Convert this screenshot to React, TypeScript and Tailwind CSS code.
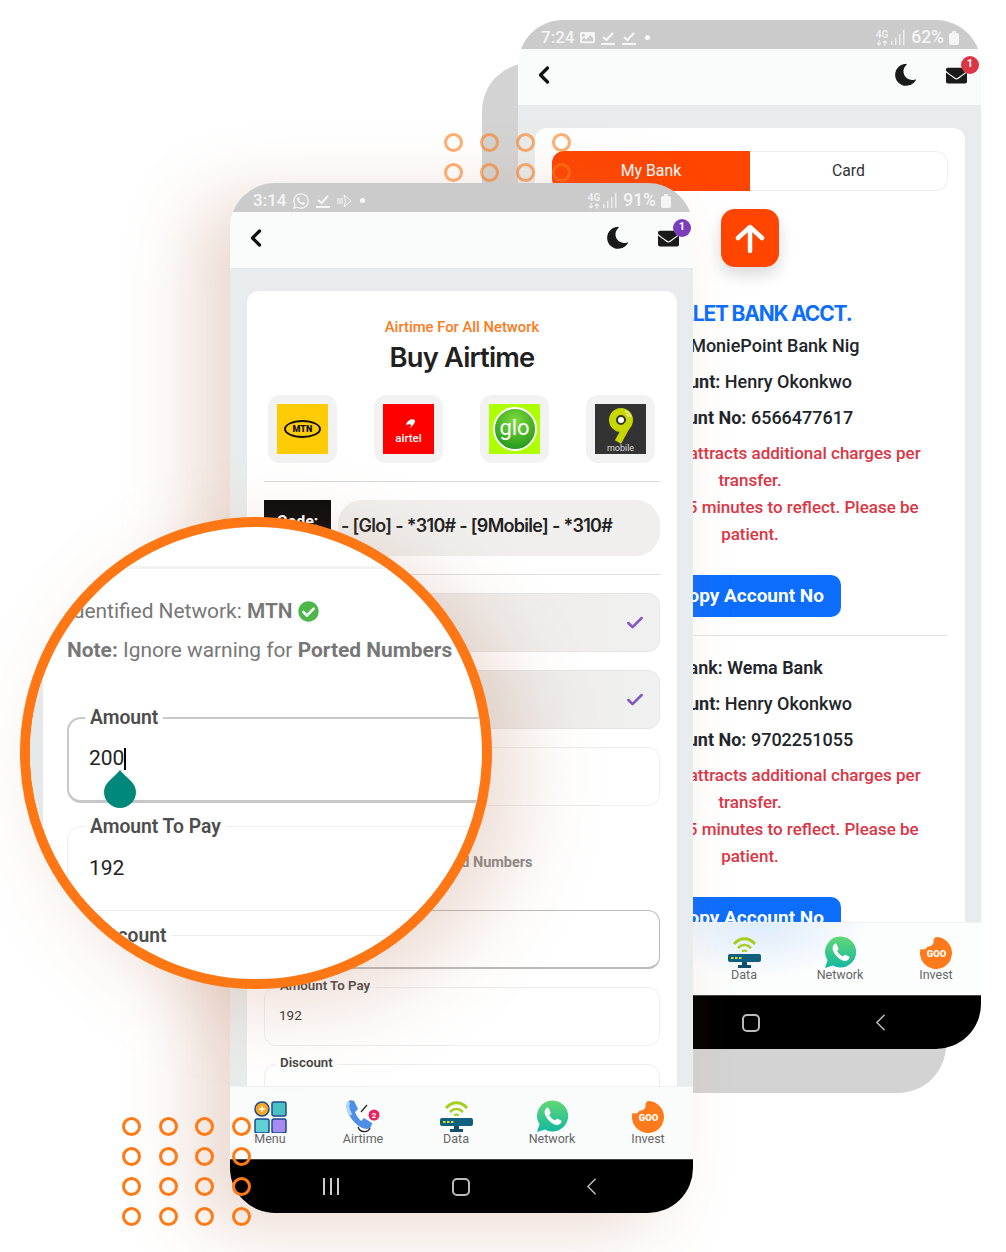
import React from 'react';
import { ChevronLeft, Check } from 'lucide-react';
import { FaMoon, FaEnvelope, FaCheckCircle, FaWhatsapp, FaImage } from 'react-icons/fa';

const CheckLine = () => (
  <svg width="15" height="15" viewBox="0 0 15 15" fill="none" stroke="currentColor" strokeWidth="2.2">
    <path d="M2 7l3.500 3L12 3" />
    <path d="M0 14h14" />
  </svg>
);

const ArrowOutline = () => (
  <svg width="15" height="16" viewBox="0 0 15 16" fill="none" stroke="currentColor" strokeWidth="1">
    <path d="M0 6h6M0 8h6M0 10h6M7 2l7 6-7 6 1.500-6z" />
  </svg>
);

const FourG = () => (
  <div className="flex flex-col items-center text-white/70">
    <span className="text-[10px] leading-[10px] font-bold">4G</span>
    <svg width="12" height="6" viewBox="0 0 12 6" fill="none" stroke="currentColor" strokeWidth="1.200">
      <path d="M3 0v5M1 3l2 2 2-2M9 6V1M7 3l2-2 2 2" />
    </svg>
  </div>
);

const Bars = () => (
  <svg width="14" height="15" viewBox="0 0 14 15" fill="currentColor" className="opacity-80">
    <rect x="0" y="11" width="1.500" height="4" />
    <rect x="4" y="8" width="1.500" height="7" />
    <rect x="8" y="4" width="1.500" height="11" />
    <rect x="12" y="0" width="1.500" height="15" />
  </svg>
);

const Battery = () => (
  <div className="flex flex-col items-center">
    <div className="w-1 h-[2px] bg-white/70" />
    <div className="w-[10px] h-[12px] rounded-[2px] bg-white/80" />
  </div>
);

const StatusBar = ({ time, battery, icons }: { time: string; battery: string; icons: React.ReactNode }) => (
  <div className="h-[29px] shrink-0 bg-[#cbcbcb] text-white/80 flex items-center justify-between pt-[6px] pl-[23px] pr-[22px]">
    <div className="flex items-center gap-[6px]">
      <span className="text-[17px] font-medium">{time}</span>
      {icons}
      <span className="w-[5px] h-[5px] rounded-full bg-white/90 ml-[2px]" />
    </div>
    <div className="flex items-center gap-[5px]">
      <div className="flex items-center gap-[3px]">
        <FourG />
        <Bars />
      </div>
      <span className="text-[17.5px] font-medium ml-[1px]">{battery}</span>
      <Battery />
    </div>
  </div>
);

const TopBar = ({ badge }: { badge: string }) => (
  <div className="h-[57px] shrink-0 bg-[#fafbfb] border-b border-[#e6e9e9] flex items-center justify-between pb-[4px] pl-[12px] pr-[14px]">
    <ChevronLeft size={28} strokeWidth={2.8} className="text-[#111]" />
    <div className="flex items-center gap-[30px]">
      <FaMoon size={22} className="text-[#1a1a1a] -rotate-[10deg]" />
      <div className="relative">
        <FaEnvelope size={21} className="text-[#1a1a1a]" />
        <span className={`absolute -top-[9px] -right-[12px] w-[18px] h-[18px] rounded-full text-white text-[11px] font-bold flex items-center justify-center ${badge}`}>1</span>
      </div>
    </div>
  </div>
);

const MenuIcon = () => (
  <svg width="33" height="32" viewBox="0 0 33 32">
    <circle cx="8" cy="8" r="7" fill="#f7a823" stroke="#1c4a8e" strokeWidth="1.500" />
    <path d="M8 5v6M5 8h6" stroke="#fff" strokeWidth="1.500" />
    <rect x="18" y="1" width="14" height="14" rx="2" fill="#49c0c4" stroke="#1c4a8e" strokeWidth="1.500" />
    <rect x="1" y="18" width="14" height="14" rx="2" fill="#5fd0d6" stroke="#1c4a8e" strokeWidth="1.500" />
    <rect x="18" y="18" width="14" height="14" rx="2" fill="#a78bf0" stroke="#1c4a8e" strokeWidth="1.500" />
  </svg>
);

const AirtimeIcon = () => (
  <svg width="34" height="34" viewBox="0 0 34 34">
    <path d="M12 27c2 6 10 6 12 1" stroke="#222" strokeWidth="1.300" fill="none" />
    <path d="M3 1C-1 4 0 11 5 18s11 11 16 11c3 0 5-3 5-6l-8-5-3 3c-2-2-5-6-6-9l3-3L8 1C6 0 4 0 3 1z" fill="#4d8fe6" />
    <path d="M3 2c-2 3-1 8 2 13" stroke="#b5d8f9" strokeWidth="3" fill="none" />
    <path d="M15 12l6-7" stroke="#222" strokeWidth="1.200" />
    <circle cx="28" cy="15" r="5.500" fill="#e8245c" />
    <text x="28" y="18" textAnchor="middle" fontSize="8" fontWeight="700" fill="#fff">2</text>
  </svg>
);

const DataIcon = () => (
  <svg width="33" height="33" viewBox="0 0 33 33">
    <path d="M6 8c6-7 15-7 21 0" stroke="#a4cf1e" strokeWidth="3" fill="none" />
    <path d="M10 12c4-4 9-4 13 0" stroke="#a4cf1e" strokeWidth="2.500" fill="none" />
    <path d="M14 15.500c2-1.500 3-1.500 5 0" stroke="#a4cf1e" strokeWidth="2" fill="none" />
    <rect x="0" y="18" width="33" height="8" rx="2" fill="#0f5f7e" />
    <rect x="3" y="21" width="2.500" height="2" fill="#d7dc3a" />
    <rect x="7" y="21" width="2.500" height="2" fill="#d7dc3a" />
    <rect x="11" y="21" width="2.500" height="2" fill="#d7dc3a" />
    <path d="M14 26h5v3h4v3H10v-3h4z" fill="#14506c" />
  </svg>
);

const NetworkIcon = () => (
  <svg width="33" height="33" viewBox="0 0 33 33">
    <defs>
      <linearGradient id="wa" x1="0" y1="0" x2="0" y2="1">
        <stop offset="0" stopColor="#63d874" />
        <stop offset="1" stopColor="#12b8a0" />
      </linearGradient>
    </defs>
    <path d="M16.500 0.500a15.500 15.500 0 1 1-7.500 29L1 32l2.500-7.700A15.500 15.500 0 0 1 16.500 0.500z" fill="url(#wa)" />
    <path d="M11 7.500c-1.500 1-2.800 3-2.300 6 .7 4 6.500 10.500 11.300 11.400 2.700.5 4.700-1 5.300-2.600.3-.8.200-1.400-.2-1.700l-3.500-1.800c-.5-.2-1-.1-1.300.3l-1.200 1.500c-2.500-1-4.700-3-6-5.500l1.200-1.300c.3-.4.400-.9.200-1.300l-1.600-3.900c-.3-.8-1.200-1.100-1.900-1.100z" fill="#fff" />
  </svg>
);

const InvestIcon = () => (
  <svg width="32" height="32" viewBox="0 0 32 32">
    <path d="M16 0a16 16 0 1 1-15.500 12c3 1 6 .500 7-2.500 3 .5 6.500-2 6-5.500 0-1.500.800-3.500 2.500-4z" fill="#ff7a1a" />
    <text x="16.500" y="20" textAnchor="middle" fontSize="9.500" fontWeight="900" fill="#fff">GOO</text>
  </svg>
);

const BottomNav = ({ glow }: { glow?: string }) => {
  const items = [
    { label: 'Menu', icon: <MenuIcon /> },
    { label: 'Airtime', icon: <AirtimeIcon /> },
    { label: 'Data', icon: <DataIcon /> },
    { label: 'Network', icon: <NetworkIcon /> },
    { label: 'Invest', icon: <InvestIcon /> },
  ];
  return (
    <div className={`h-[73px] shrink-0 border-t border-[#f0f2f2] grid grid-cols-[80px_106px_80px_112px_80px] pt-[13px] ${glow ?? 'bg-[#fafbfb]'}`}>
      {items.map((it) => (
        <div key={it.label} className="flex flex-col items-center">
          <div className="h-[33px] flex items-center justify-center">{it.icon}</div>
          <span className="text-[12.5px] leading-[14px] text-[#666] -mt-[1px]">{it.label}</span>
        </div>
      ))}
    </div>
  );
};

const SoftKeys = ({ shift }: { shift: string }) => (
  <div className={`h-[54px] shrink-0 bg-black border-t border-[#444] flex items-center justify-center text-[#bbb] ${shift}`}>
    <div className="w-[130px] flex justify-center gap-[5px]">
      <span className="w-[2px] h-[17px] bg-[#ccc]" />
      <span className="w-[2px] h-[17px] bg-[#ccc]" />
      <span className="w-[2px] h-[17px] bg-[#ccc]" />
    </div>
    <div className="w-[130px] flex justify-center">
      <span className="w-[18px] h-[18px] rounded-[5px] border-2 border-[#bbb]" />
    </div>
    <div className="w-[130px] flex justify-center">
      <ChevronLeft size={29} strokeWidth={1.300} />
    </div>
  </div>
);

const Tile = ({ children, bg }: { children: React.ReactNode; bg: string }) => (
  <div className="w-[69px] h-[68px] rounded-xl bg-[#f2f2f2] flex items-center justify-center">
    <div className={`w-[51px] h-[50px] flex flex-col items-center justify-center overflow-hidden ${bg}`}>{children}</div>
  </div>
);

const Field = ({ label, value, box, extra }: { label: string; value?: string; box: string; extra?: React.ReactNode }) => (
  <div className={`relative h-[59px] rounded-xl flex items-center justify-between pl-[14px] pr-[14px] ${box}`}>
    <span className="absolute -top-[10px] left-[11px] bg-white px-1 text-[13.3px] leading-[16px] font-semibold text-[#444]">{label}</span>
    <span className="text-[13.5px] text-[#333] -mt-[2px]">{value}</span>
    {extra}
  </div>
);

const BankBlock = ({ bank, no, strong }: { bank: string; no: string; strong?: boolean }) => (
  <div className="text-center text-[#212529]">
    <p className={`text-[18px] leading-[28px] mb-2 ${strong ? 'font-semibold' : 'font-medium'}`}>{bank}</p>
    <p className="text-[18px] leading-[28px] mb-2 font-medium"><b className="font-bold">Account:</b> Henry Okonkwo</p>
    <p className="text-[18px] leading-[28px] font-medium"><b className="font-bold">Account No:</b> {no}</p>
    <p className="mt-2 text-[17px] leading-[27px] font-medium text-[#dc3545]">
      Every transfer attracts additional charges per<br />transfer.<br />Wait for up to 5 minutes to reflect. Please be<br />patient.
    </p>
    <div className="mt-[27px] mx-auto w-[182px] h-[42px] rounded-[10px] bg-[#0d6efd] text-white text-[19px] font-bold flex items-center justify-center">Copy Account No</div>
  </div>
);

export default function App() {
  return (
    <div className="relative w-[1006px] h-[1252px] bg-white overflow-hidden font-['Roboto',sans-serif]">
      {/* grey shape behind the back phone */}
      <div className="absolute left-[482px] top-[63px] w-[464px] h-[1030px] rounded-[48px] bg-[#d3d3d3]" />

      {/* back phone: bank transfer */}
      <div className="absolute left-[518px] top-[20px] w-[463px] h-[1029px] rounded-[45px] overflow-hidden flex flex-col">
        <StatusBar
          time="7:24"
          battery="62%"
          icons={<><FaImage size={15} /><CheckLine /><CheckLine /></>}
        />
        <TopBar badge="bg-[#dc3545]" />
        <div className="flex-1 min-h-0 overflow-hidden bg-[#e9ecec] pl-[17px] pr-[16px] pt-[22px]">
          <div className="bg-white rounded-t-xl h-[900px] px-[17px] pt-[23px]">
            <div className="flex h-[40px] text-[15.8px]">
              <div className="w-1/2 rounded-l-xl bg-[#ff4500] text-white flex items-center justify-center">My Bank</div>
              <div className="w-1/2 rounded-r-xl border border-l-0 border-[#eeeeee] text-[#333] flex items-center justify-center">Card</div>
            </div>
            <div className="mt-[18px] mx-auto w-[58px] h-[58px] rounded-[14px] bg-[#ff4500] shadow-[0_8px_16px_rgba(0,0,0,0.15)] flex items-center justify-center">
              <svg width="30" height="29" viewBox="0 0 30 29" fill="none" stroke="#fff" strokeWidth="4.500" strokeLinecap="round" strokeLinejoin="round">
                <path d="M15 27V3M3 14L15 3l12 11" />
              </svg>
            </div>
            <h3 className="mt-[32px] text-center text-[21px] leading-[30px] font-['Inter',sans-serif] font-bold tracking-[-1.2px] text-[#0d6efd]">WALLET BANK ACCT.</h3>
            <div className="mt-[3px]">
              <BankBlock bank="Bank: MoniePoint Bank Nig" no="6566477617" />
            </div>
            <hr className="mt-[18px] border-[#e2e2e2]" />
            <div className="mt-[18px]">
              <BankBlock bank="Bank: Wema Bank" no="9702251055" strong />
            </div>
          </div>
        </div>
        <BottomNav glow="bg-[radial-gradient(ellipse_110px_55px_at_240px_0,#dcebfb,#fcfdfd)]" />
        <SoftKeys shift="pl-[2px]" />
      </div>

      {/* faded rings over the back phone */}
      <div className="absolute left-[444px] top-[133px] grid grid-cols-4 gap-x-[17px] gap-y-[11px] opacity-60">
        {Array.from({ length: 8 }).map((_, i) => (
          <span key={i} className="w-[19px] h-[19px] rounded-full border-[3px] border-[#ff7a14]" />
        ))}
      </div>

      {/* front phone: buy airtime */}
      <div className="absolute left-[230px] top-[183px] w-[463px] h-[1030px] rounded-[45px] shadow-[-35px_15px_70px_rgba(190,130,100,0.3)]">
        <div className="w-full h-full rounded-[45px] overflow-hidden flex flex-col">
          <StatusBar
            time="3:14"
            battery="91%"
            icons={<><FaWhatsapp size={18} /><CheckLine /><ArrowOutline /></>}
          />
          <TopBar badge="bg-[#7b3db8]" />
          <div className="flex-1 min-h-0 overflow-hidden bg-[#e9ecec] pl-[17px] pr-[16px] pt-[22px]">
            <div className="bg-white rounded-t-xl h-[900px] px-[17px] pt-[26px]">
              <p className="text-center text-[14.8px] leading-[20px] font-medium text-[#ff7a1a]">Airtime For All Network</p>
              <h2 className="mt-[4px] text-center text-[27.3px] leading-[34px] font-['Inter',sans-serif] font-semibold tracking-[-0.8px] text-[#212121]">Buy Airtime</h2>
              <div className="mt-[20px] pl-[4px] pr-[5px] flex justify-between">
                <Tile bg="bg-[#ffcb05]">
                  <span className="w-[37px] h-[18px] rounded-[50%] border-2 border-[#111] text-[9px] leading-[14px] font-black text-center text-[#111]">MTN</span>
                </Tile>
                <Tile bg="bg-[#ff0000]">
                  <svg width="14" height="14" viewBox="0 0 14 14" className="mt-[4px]">
                    <path d="M2 13c3-1 6-3 7-5 1-2-3-2-5-1C5 1 13 0 13 3c0 3-5 8-11 10z" fill="#fff" />
                  </svg>
                  <span className="text-[11.5px] leading-[13px] font-medium text-white">airtel</span>
                </Tile>
                <Tile bg="bg-[#aeff00]">
                  <div className="w-[44px] h-[44px] rounded-full border-2 border-white bg-[radial-gradient(circle_at_50%_30%,#7fdc3a,#118a16)] flex items-center justify-center text-white text-[22px] leading-[24px] pb-[3px]">glo</div>
                </Tile>
                <Tile bg="bg-[#333333]">
                  <svg width="28" height="36" viewBox="0 0 28 36" fill="none" className="mt-[2px]">
                    <circle cx="14" cy="12" r="8.500" stroke="#c6d800" strokeWidth="7" />
                    <path d="M21 16L11 34" stroke="#c6d800" strokeWidth="7" />
                    <circle cx="14" cy="12" r="3" fill="#fff" />
                    <path d="M18 3a8 8 0 0 1 6 6M19 6a5 5 0 0 1 3 3" stroke="#fff" strokeWidth="1" />
                  </svg>
                  <span className="text-[9px] leading-[9px] text-[#ddd]">mobile</span>
                </Tile>
              </div>
              <hr className="mt-[18px] border-[#d8d8d8]" />
              <div className="mt-[18px] flex gap-[7px] h-[56px]">
                <div className="w-[67px] h-full bg-[#0a0a0a] text-white text-[16px] font-bold flex justify-center pt-[10px]">Code:</div>
                <div className="flex-1 rounded-[24px] bg-[#f0efed] flex items-center pl-[3px] pb-[6px] text-[18px] font-['Inter',sans-serif] font-semibold tracking-[-0.7px] text-[#222]">
                  - [Glo] - *310# - [9Mobile] - *310#
                </div>
              </div>
              <hr className="mt-[18px] border-[#e0e0e0]" />
              <div className="mt-[18px] flex flex-col gap-[18px]">
                <Field label="Network" box="bg-gradient-to-r from-[#ece6e1] to-[#f1f1f1] border border-[#e5e5e5]" extra={<Check size={20} strokeWidth={3} className="text-[#7e57c2]" />} />
                <Field label="Data" box="bg-gradient-to-r from-[#e8e2dd] to-[#f1f1f1] border border-[#e5e5e5]" extra={<Check size={20} strokeWidth={3} className="text-[#7e57c2]" />} />
                <Field label="Phone Number" box="border border-[#eeeeee]" />
              </div>
              <p className="mt-[18px] text-[14.5px] leading-[20px] text-[#888]">Identified Network: <b>MTN</b></p>
              <p className="mt-[9px] text-[14.5px] leading-[20px] font-medium text-[#888] whitespace-nowrap"><b>Note:</b> Ignore warning for <b>Ported Numbers</b></p>
              <div className="mt-[37px] flex flex-col gap-[18px]">
                <Field label="Amount" value="200" box="border border-[#bbbbbb] border-b-2" />
                <Field label="Amount To Pay" value="192" box="border border-[#eeeeee]" />
                <Field label="Discount" box="border border-[#eeeeee]" />
              </div>
            </div>
          </div>
          <BottomNav />
          <SoftKeys shift="pr-[1px]" />
        </div>
      </div>

      {/* magnifier circle */}
      <div className="absolute left-[20px] top-[517px] w-[472px] h-[472px] rounded-full border-[10px] border-[#ff7714] bg-white overflow-hidden shadow-[30px_20px_80px_rgba(190,130,100,0.28)] flex">
        <div className="w-[13px] shrink-0 bg-[#e6e9e9]" />
        <div className="flex-1 min-w-0">
          <div className="mt-[39px] h-[3px] w-[600px] bg-[#f3f3f3]" />
          <p className="mt-[27px] ml-[24px] flex items-center gap-[5px] text-[20.9px] leading-[30px] text-[#777] whitespace-nowrap">
            <span>Identified Network: <b className="font-semibold">MTN</b></span>
            <FaCheckCircle size={21} className="text-[#4cb648]" />
          </p>
          <p className="mt-[9px] ml-[24px] text-[20.9px] leading-[30px] text-[#777] whitespace-nowrap">
            <b className="font-bold">Note:</b> Ignore warning for <b className="font-bold">Ported Numbers</b>
          </p>
          <div className="relative mt-[52px] ml-[24px] w-[600px] h-[86px] rounded-[14px] border-2 border-b-[3px] border-[#c8c8c8] flex items-center pl-[20px] pb-[1px]">
            <span className="absolute -top-[13px] left-[16px] bg-white px-[5px] text-[19.3px] leading-[24px] font-semibold text-[#4d4d4d]">Amount</span>
            <span className="text-[21px] text-[#222]">200</span>
            <span className="w-[2px] h-[22px] bg-black" />
            <svg width="32" height="38" viewBox="0 0 32 38" className="absolute left-[35px] top-[51px]">
              <path d="M16 0C21 7 32 12 32 22a16 16 0 0 1-32 0C0 12 11 7 16 0z" fill="#00897b" />
            </svg>
          </div>
          <div className="relative mt-[23px] ml-[24px] w-[600px] h-[85px] rounded-[14px] border border-[#eeeeee] flex items-center pl-[21px]">
            <span className="absolute -top-[12px] left-[17px] bg-white px-[5px] text-[19.3px] leading-[24px] font-semibold text-[#4d4d4d]">Amount To Pay</span>
            <span className="text-[21px] text-[#222]">192</span>
          </div>
          <div className="relative mt-[24px] ml-[24px] w-[600px] h-[85px] rounded-[14px] border border-[#eeeeee]">
            <span className="absolute -top-[12px] left-[17px] bg-white px-[5px] text-[19.3px] leading-[24px] font-semibold text-[#4d4d4d]">Discount</span>
          </div>
        </div>
      </div>

      {/* rings at the bottom left */}
      <div className="absolute left-[122px] top-[1117px] grid grid-cols-4 gap-x-[17.500px] gap-y-[11px]">
        {Array.from({ length: 16 }).map((_, i) => (
          <span key={i} className="w-[19px] h-[19px] rounded-full border-[3px] border-[#ff7a14]" />
        ))}
      </div>
    </div>
  );
}
